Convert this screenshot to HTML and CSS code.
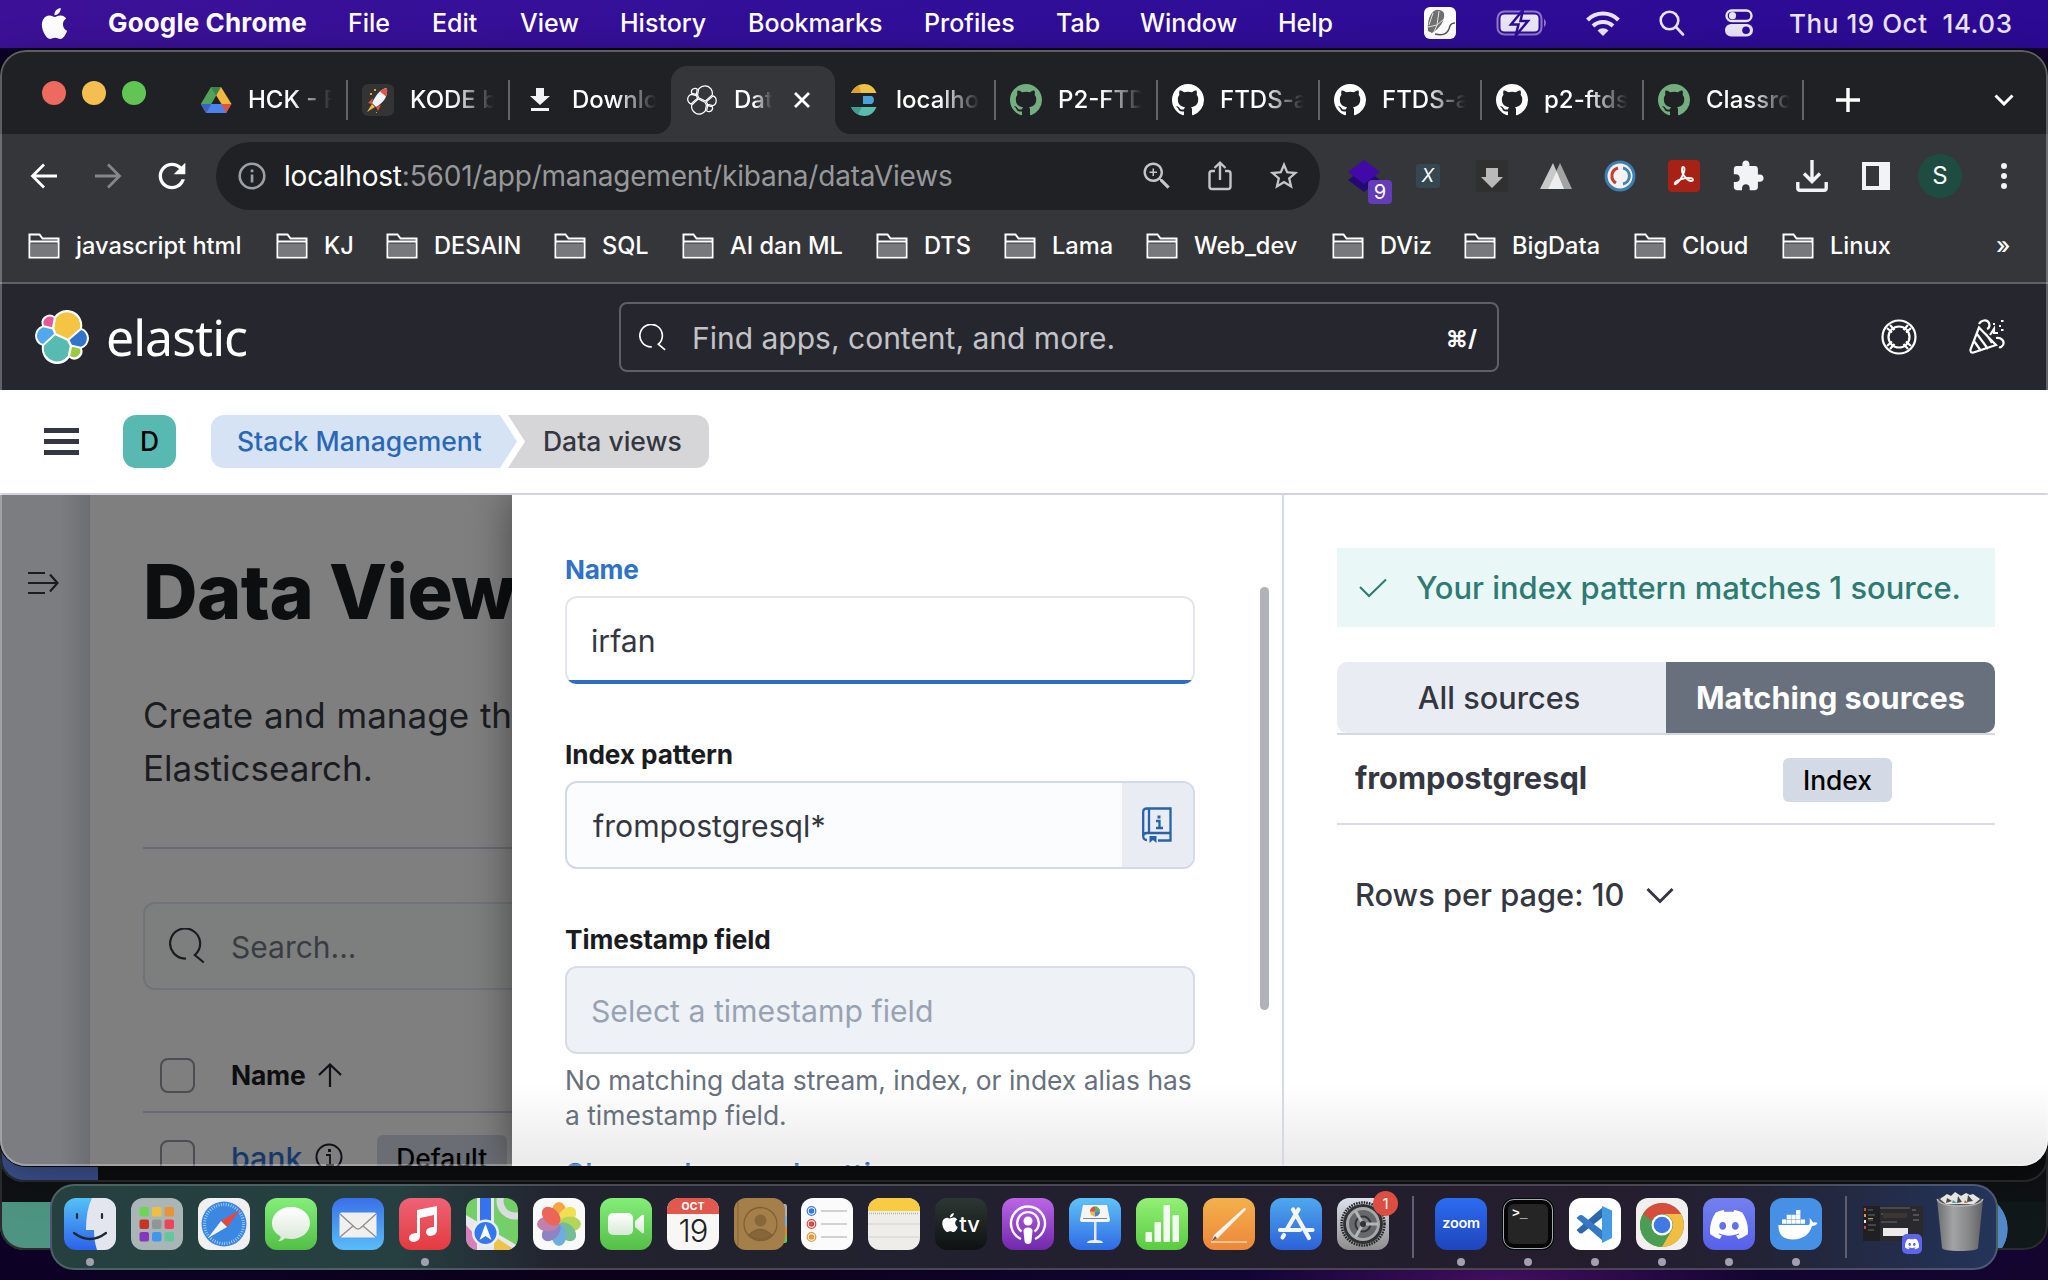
FILE: index.html
```html
<!DOCTYPE html>
<html lang="en">
<head>
<meta charset="utf-8">
<title>Data views - Elastic</title>
<link rel="stylesheet" href="styles.css">
</head>
<body>
<svg class="defs" width="0" height="0">
  <defs>
    <symbol id="apple" viewBox="0 0 24 24"><path d="M12.152 6.896c-.948 0-2.415-1.078-3.96-1.04-2.04.027-3.91 1.183-4.961 3.014-2.117 3.675-.546 9.103 1.519 12.09 1.013 1.454 2.208 3.09 3.792 3.039 1.52-.065 2.09-.987 3.935-.987 1.831 0 2.35.987 3.96.948 1.637-.026 2.676-1.48 3.676-2.948 1.156-1.688 1.636-3.325 1.662-3.415-.039-.013-3.182-1.221-3.22-4.857-.026-3.04 2.48-4.494 2.597-4.559-1.429-2.09-3.623-2.324-4.39-2.376-2-.156-3.675 1.09-4.61 1.09zM15.53 3.83c.843-1.012 1.4-2.427 1.245-3.83-1.207.052-2.662.805-3.532 1.818-.78.896-1.454 2.338-1.273 3.714 1.338.104 2.715-.688 3.559-1.701"/></symbol>
    <symbol id="github" viewBox="0 0 16 16"><path d="M8 0C3.58 0 0 3.58 0 8c0 3.54 2.29 6.53 5.47 7.59.4.07.55-.17.55-.38 0-.19-.01-.82-.01-1.49-2.01.37-2.53-.49-2.69-.94-.09-.23-.48-.94-.82-1.13-.28-.15-.68-.52-.01-.53.63-.01 1.08.58 1.23.82.72 1.21 1.87.87 2.33.66.07-.52.28-.87.51-1.07-1.78-.2-3.64-.89-3.64-3.95 0-.87.31-1.59.82-2.15-.08-.2-.36-1.02.08-2.12 0 0 .67-.21 2.2.82.64-.18 1.32-.27 2-.27s1.36.09 2 .27c1.53-1.04 2.2-.82 2.2-.82.44 1.1.16 1.92.08 2.12.51.56.82 1.27.82 2.15 0 3.07-1.87 3.75-3.65 3.95.29.25.54.73.54 1.48 0 1.07-.01 1.93-.01 2.2 0 .21.15.46.55.38A8.01 8.01 0 0 0 16 8c0-4.42-3.58-8-8-8z"/></symbol>
    <symbol id="folder" viewBox="0 0 32 26"><path d="M1.500 24.500V1.500h10l3 4h16v19z" fill="none" stroke="#fff" stroke-width="2"/><path d="M1.500 8.500h29" stroke="#fff" stroke-width="2"/><path d="M2.500 10.500h27v13h-27z" fill="#77787b"/></symbol>
    <symbol id="discord" viewBox="0 0 24 24"><path d="M20.317 4.37a19.79 19.79 0 00-4.885-1.515.074.074 0 00-.079.037c-.211.375-.445.865-.608 1.25-1.845-.276-3.68-.276-5.487 0-.164-.393-.406-.874-.618-1.25a.077.077 0 00-.079-.037A19.736 19.736 0 003.677 4.37a.07.07 0 00-.032.028C.533 9.046-.319 13.58.099 18.058a.082.082 0 00.031.056c2.053 1.508 4.041 2.423 5.993 3.03a.078.078 0 00.084-.028c.462-.63.873-1.295 1.226-1.994a.076.076 0 00-.042-.106 13.1 13.1 0 01-1.872-.892.077.077 0 01-.008-.128c.126-.094.252-.192.372-.291a.074.074 0 01.078-.011c3.928 1.793 8.18 1.793 12.061 0a.074.074 0 01.079.01c.12.099.246.198.373.292a.077.077 0 01-.007.128 12.3 12.3 0 01-1.873.891.077.077 0 00-.041.107c.36.698.772 1.363 1.225 1.993a.076.076 0 00.084.029c1.961-.607 3.95-1.522 6.002-3.03a.077.077 0 00.031-.055c.5-5.177-.838-9.674-3.548-13.66a.061.061 0 00-.031-.029zM8.02 15.331c-1.183 0-2.157-1.086-2.157-2.419s.956-2.419 2.157-2.419c1.211 0 2.176 1.095 2.157 2.419 0 1.333-.956 2.419-2.157 2.419zm7.975 0c-1.183 0-2.157-1.086-2.157-2.419s.955-2.419 2.157-2.419c1.211 0 2.176 1.095 2.157 2.419 0 1.333-.946 2.419-2.157 2.419z"/></symbol>
    <symbol id="search" viewBox="0 0 36 36"><path d="M17 31.500A15 15 0 1 1 25.800 28l9 7.500" fill="none" stroke="currentColor" stroke-width="2.200" transform="translate(0 -1)"/></symbol>
    <symbol id="petals" viewBox="0 0 52 52"><g opacity=".88"><ellipse cx="26" cy="15" rx="7.500" ry="11" fill="#f59a2c"/><ellipse cx="26" cy="15" rx="7.500" ry="11" fill="#f0dc3a" transform="rotate(45 26 26)"/><ellipse cx="26" cy="15" rx="7.500" ry="11" fill="#a9d145" transform="rotate(90 26 26)"/><ellipse cx="26" cy="15" rx="7.500" ry="11" fill="#62b58a" transform="rotate(135 26 26)"/><ellipse cx="26" cy="15" rx="7.500" ry="11" fill="#5ba4dc" transform="rotate(180 26 26)"/><ellipse cx="26" cy="15" rx="7.500" ry="11" fill="#7d74bd" transform="rotate(225 26 26)"/><ellipse cx="26" cy="15" rx="7.500" ry="11" fill="#b8719f" transform="rotate(270 26 26)"/><ellipse cx="26" cy="15" rx="7.500" ry="11" fill="#ea5240" transform="rotate(315 26 26)"/></g></symbol>
  </defs>
</svg>

<header class="menubar">
  <svg class="menubar-apple" width="31" height="31"><use href="#apple"/></svg>
  <nav class="menus">
    <b>Google Chrome</b><span>File</span><span>Edit</span><span>View</span><span>History</span><span>Bookmarks</span><span>Profiles</span><span>Tab</span><span>Window</span><span>Help</span>
  </nav>
  <div class="status">
    <svg width="32" height="32" viewBox="0 0 32 32"><rect width="32" height="32" rx="6" fill="#fff"/><path d="M4 24C3 14 6 5 12 3q5-1 8 3c1 8-4 15-12 20z" fill="#707070"/><path d="M4 20l9-2 7-6M13 18l-3 7M15 4l-2 14M9 6L5 18" stroke="#e4e4e4" fill="none"/><path d="M11 27c8 2 12 0 14-5 1-4 2-6 6-6" fill="none" stroke="#555" stroke-width="1.500"/></svg>
    <svg width="52" height="26" viewBox="0 0 52 26"><rect x="1.500" y="1.500" width="44" height="23" rx="7" fill="none" stroke="#8d78c8" stroke-width="2"/><rect x="4.500" y="4.500" width="38" height="17" rx="4" fill="#e9e5f6"/><path d="M48 8.500q4 4.500 0 9z" fill="#8d78c8"/><path d="M27 0L15 14.500h7.500L19.500 26 32 11h-7.500z" fill="#e9e5f6" stroke="#2f0c97" stroke-width="2.500"/></svg>
    <svg width="36" height="26" viewBox="0 0 36 26"><g fill="none" stroke="#e9e5f6" stroke-width="4"><path d="M2.500 10a22 22 0 0 1 31 0"/><path d="M8 16a14.500 14.500 0 0 1 20 0"/></g><path d="M12.500 20.500a8 8 0 0 1 11 0L18 26z" fill="#e9e5f6"/></svg>
    <svg width="26" height="26" viewBox="0 0 26 26"><g fill="none" stroke="#e9e5f6" stroke-width="2.600" stroke-linecap="round"><circle cx="10.500" cy="10.500" r="8.800"/><path d="M17 17l7 7.500"/></g></svg>
    <svg width="28" height="28" viewBox="0 0 28 28"><rect x="1.500" y="1.500" width="25" height="10.500" rx="5.200" fill="none" stroke="#e9e5f6" stroke-width="2.400"/><circle cx="7.500" cy="6.700" r="3.600" fill="#e9e5f6"/><rect y="15" width="28" height="12.500" rx="6.200" fill="#e9e5f6"/><circle cx="21" cy="21.200" r="3.800" fill="#2e0c96"/></svg>
    <time>Thu 19 Oct&nbsp; 14.03</time>
  </div>
</header>

<main class="desktop">
  <div class="back-window back-window-far"></div>
  <div class="back-window back-window-near"></div>

  <section class="window">
    <div class="tabstrip">
      <div class="lights"><i class="red"></i><i class="amber"></i><i class="green"></i></div>
      <div class="tab"><svg width="32" height="28" viewBox="0 0 32 28"><path d="M11 1h10l10.500 17h-10z" fill="#f3b73e"/><path d="M11 1l5.200 8.500L6 27 .8 18z" fill="#4fa35b"/><path d="M11 1h10l-4.800 8.500z" fill="#3c8548"/><path d="M6 27l5-9h20.500L26 27z" fill="#4c82ee"/><path d="M6 27l-5.200-9H11z" fill="#3a62c4"/><path d="M21.500 18h10L26 27z" fill="#e2513e"/></svg><span>HCK - F</span></div>
      <div class="tab"><svg width="32" height="32" viewBox="0 0 32 32"><rect width="32" height="32" rx="6" fill="#343434"/><path d="M25 4c-7 1-11 7-15 15l4 4c7-4 12-10 11-19z" fill="#f4f4f6"/><path d="M25 4c-3 .4-5 1.500-7 3.500l6 5c1-3 1.400-5 1-8.500z" fill="#e0524b"/><path d="M11 14l-5 5 4 1zm8 7l-3 6-2-4z" fill="#e0524b"/><path d="M10 20l-5 8 8-5z" fill="#f2c13f"/><path d="M8 9h2v2H8zM12 5h2v2h-2zM14 28h1v1h-1z" fill="#e2a33c"/></svg><span>KODE b</span></div>
      <div class="tab"><svg width="32" height="32" viewBox="0 0 32 32"><path d="M12 4h8v8h6L16 21 6 12h6zM7 24h18v3H7z" fill="#f1f3f4"/></svg><span>Downlo</span></div>
      <div class="tab tab-active"><svg width="32" height="32" viewBox="-.6 -.6 33.200 33.200"><g fill="none" stroke="#fff" stroke-width="1.300"><path d="M12.580 13.787l7.002 3.211 7.066-6.213a7.849 7.849 0 0 0 .152-1.557c0-1.692-.539-3.340-1.535-4.700a7.898 7.898 0 0 0-8.895-2.735 7.950 7.950 0 0 0-3.780 2.744L11.410 10.700z"/><path d="M5.333 21.228A7.964 7.964 0 0 0 6.701 27.300a7.904 7.904 0 0 0 8.923 2.745 7.950 7.950 0 0 0 3.784-2.748l1.166-6.102-1.556-2.985-7.030-3.210z"/><path d="M5.288 9.067l4.800 1.137L11.140 4.730a3.785 3.785 0 0 0-5.852 4.337z"/><path d="M4.872 10.214a5.294 5.294 0 0 0-2.595 1.882 5.324 5.324 0 0 0-.142 6.124 5.287 5.287 0 0 0 2.520 1.987l6.733-6.100-1.236-2.650z"/><path d="M20.873 27.277a3.736 3.736 0 0 0 5.386-.845 3.813 3.813 0 0 0 .451-3.484l-4.800-1.125z"/><path d="M21.848 20.563l5.280 1.238a5.340 5.340 0 0 0 3.602-5.091 5.322 5.322 0 0 0-3.359-4.930l-6.905 6.070z"/></g></svg><span>Dat</span><svg class="tab-close" width="20" height="20" viewBox="0 0 20 20"><path d="M3 3l14 14M17 3L3 17" stroke="#fff" stroke-width="2.800"/></svg></div>
      <div class="tab"><svg width="32" height="32" viewBox="0 0 32 32"><path d="M3 9C6 3 11 0 16.500 0c5 0 9.500 3 12 9z" fill="#eec344"/><path d="M3 9C5 5 8 2.500 11 1l2 8z" fill="#d9a334"/><path d="M2 12h11v8H2z" fill="#1b2127"/><path d="M15 12h9a5 5 0 0 1 0 8h-9z" fill="#4aa2dc"/><path d="M3 23h25.500c-2.500 6-7 9-12 9C11 32 6 29 3 23z" fill="#5bbbae"/><path d="M3 23h11l-4 7.500C7 29 4.500 26.500 3 23z" fill="#459a90"/></svg><span>localho</span></div>
      <div class="tab tab-green"><svg width="32" height="32"><use href="#github"/></svg><span>P2-FTD</span></div>
      <div class="tab"><svg width="32" height="32"><use href="#github"/></svg><span>FTDS-a</span></div>
      <div class="tab"><svg width="32" height="32"><use href="#github"/></svg><span>FTDS-a</span></div>
      <div class="tab"><svg width="32" height="32"><use href="#github"/></svg><span>p2-ftds</span></div>
      <div class="tab tab-green tab-end"><svg width="32" height="32"><use href="#github"/></svg><span>Classro</span></div>
      <svg class="tab-new" width="24" height="24" viewBox="0 0 24 24"><path d="M12 0v24M0 12h24" stroke="#fff" stroke-width="3.400"/></svg>
      <svg class="tab-list" width="20" height="12" viewBox="0 0 20 12"><path d="M1.500 1.500L10 10l8.500-8.500" fill="none" stroke="#fff" stroke-width="3"/></svg>
    </div>

    <div class="toolbar">
      <div class="nav-buttons">
        <svg width="28" height="26" viewBox="0 0 28 26"><path d="M27 13H2.500M14 1.500L2.500 13 14 24.500" fill="none" stroke="#fff" stroke-width="2.800"/></svg>
        <svg width="28" height="26" viewBox="0 0 28 26"><path d="M1 13h24.500M14 1.500L25.500 13 14 24.500" fill="none" stroke="#85868a" stroke-width="2.800"/></svg>
        <svg width="40" height="40" viewBox="0 0 24 24"><path fill="#fff" d="M17.650 6.350C16.200 4.900 14.210 4 12 4c-4.420 0-7.990 3.580-7.990 8s3.570 8 7.990 8c3.730 0 6.840-2.550 7.730-6h-2.080c-.82 2.330-3.040 4-5.650 4-3.310 0-6-2.690-6-6s2.690-6 6-6c1.660 0 3.140.69 4.220 1.780L13 11h7V4z"/></svg>
      </div>
      <div class="omnibox">
        <svg width="28" height="28" viewBox="0 0 28 28"><circle cx="14" cy="14" r="12.300" fill="none" stroke="#9aa0a6" stroke-width="2.600"/><path d="M12.700 7.500h2.700v2.700h-2.700zm0 5h2.700v8h-2.700z" fill="#9aa0a6"/></svg>
        <span class="url"><em>localhost</em>:5601/app/management/kibana/dataViews</span>
        <svg width="36" height="36" viewBox="0 0 24 24" fill="#c3c5c8"><path d="M15.500 14h-.79l-.28-.27C15.410 12.590 16 11.110 16 9.500 16 5.910 13.090 3 9.500 3S3 5.910 3 9.500 5.910 16 9.500 16c1.610 0 3.090-.59 4.230-1.570l.27.28v.79l5 4.990L20.490 19zm-6 .4a4.900 4.900 0 1 1 0-9.800 4.900 4.900 0 0 1 0 9.800z"/><path d="M9 7h1v2h2v1h-2v2H9v-2H7V9h2z"/></svg>
        <svg width="24" height="30" viewBox="0 0 24 30"><path d="M7 10H4a2.500 2.500 0 0 0-2.500 2.500v13A2.500 2.500 0 0 0 4 28h16a2.500 2.500 0 0 0 2.500-2.500v-13A2.500 2.500 0 0 0 20 10h-3M12 19V2M6.500 7L12 1.700 17.500 7" fill="none" stroke="#c3c5c8" stroke-width="2.400"/></svg>
        <svg class="star" width="34" height="34" viewBox="0 0 24 24"><path fill="#c3c5c8" d="M22 9.240l-7.190-.62L12 2 9.190 8.630 2 9.240l5.460 4.730L5.820 21 12 17.270 18.180 21l-1.630-7.030zM12 15.400l-3.760 2.270 1-4.280-3.320-2.880 4.380-.38L12 6.100l1.710 4.040 4.380.38-3.320 2.880 1 4.280z"/></svg>
      </div>
      <div class="extensions">
        <div class="ext ext-badged"><svg width="32" height="32" viewBox="0 0 32 32"><path d="M16 8l16 12-16 12L0 20z" fill="#230a73"/><path d="M16 0l16 12-16 12L0 12z" fill="#4109a6"/></svg><span class="badge">9</span></div>
        <div class="ext"><span class="ext-x">X</span></div>
        <div class="ext"><svg width="32" height="32" viewBox="0 0 32 32"><rect width="32" height="32" rx="3" fill="#303030"/><path d="M10 8h12v9h5L16 28 5 17h5z" fill="#b9b9b9"/></svg></div>
        <div class="ext"><svg width="32" height="28" viewBox="0 0 32 28"><path d="M13 1l11 26H0z" fill="#c9c9c9"/><path d="M20 1l12 26H8z" fill="#a3a3a3"/><path d="M16.500 9L24 27H8z" fill="#eee"/></svg></div>
        <div class="ext"><svg width="32" height="32" viewBox="0 0 32 32"><circle cx="16" cy="16" r="15.500" fill="#3c7fb0"/><circle cx="16" cy="16" r="12.500" fill="#f3f3f3"/><path d="M14 8a8.200 8.200 0 0 0-2 15" fill="none" stroke="#c73c33" stroke-width="3"/><path d="M19 8a8.200 8.200 0 0 1 0 16" fill="none" stroke="#4583b4" stroke-width="3"/></svg></div>
        <div class="ext"><svg width="32" height="32" viewBox="0 0 32 32"><rect width="32" height="32" rx="4" fill="#a92115"/><path d="M15 7c3 0 1 7-2 11.500S6 26 7 23s9-5 14-5 5 3 2 3-9-6-9-10.500 1-3.500 1-3.500z" fill="none" stroke="#fff" stroke-width="1.900"/></svg></div>
        <div class="ext"><svg width="34" height="34" viewBox="0 0 24 24"><path fill="#f1f3f4" d="M20.500 11H19V7c0-1.100-.9-2-2-2h-4V3.500C13 2.120 11.880 1 10.500 1S8 2.120 8 3.500V5H4c-1.100 0-1.990.9-1.990 2v3.800H3.500c1.490 0 2.700 1.210 2.700 2.700s-1.210 2.700-2.700 2.700H2V20c0 1.100.9 2 2 2h3.800v-1.500c0-1.490 1.210-2.700 2.700-2.700s2.700 1.210 2.700 2.700V22H17c1.100 0 2-.9 2-2v-4h1.500c1.380 0 2.500-1.120 2.500-2.500S21.880 11 20.500 11z"/></svg></div>
        <div class="ext"><svg width="32" height="32" viewBox="0 0 32 32"><path d="M16 0v21M8 13.500l8 8 8-8M1.800 22v6a2.200 2.200 0 0 0 2.200 2.200h24a2.200 2.200 0 0 0 2.200-2.200v-6" fill="none" stroke="#f1f3f4" stroke-width="3.400"/></svg></div>
        <div class="ext"><svg width="28" height="28" viewBox="0 0 28 28"><path fill="#f1f3f4" fill-rule="evenodd" d="M0 0h28v28H0zM4 4v20h13V4z"/></svg></div>
        <div class="avatar">S</div>
        <svg class="kebab" width="6" height="28" viewBox="0 0 6 28" fill="#f1f3f4"><circle cx="3" cy="4" r="3"/><circle cx="3" cy="14" r="3"/><circle cx="3" cy="24" r="3"/></svg>
      </div>
    </div>

    <div class="bookmarks">
      <span><svg width="32" height="26"><use href="#folder"/></svg>javascript html</span>
      <span><svg width="32" height="26"><use href="#folder"/></svg>KJ</span>
      <span><svg width="32" height="26"><use href="#folder"/></svg>DESAIN</span>
      <span><svg width="32" height="26"><use href="#folder"/></svg>SQL</span>
      <span><svg width="32" height="26"><use href="#folder"/></svg>AI dan ML</span>
      <span><svg width="32" height="26"><use href="#folder"/></svg>DTS</span>
      <span><svg width="32" height="26"><use href="#folder"/></svg>Lama</span>
      <span><svg width="32" height="26"><use href="#folder"/></svg>Web_dev</span>
      <span><svg width="32" height="26"><use href="#folder"/></svg>DViz</span>
      <span><svg width="32" height="26"><use href="#folder"/></svg>BigData</span>
      <span><svg width="32" height="26"><use href="#folder"/></svg>Cloud</span>
      <span><svg width="32" height="26"><use href="#folder"/></svg>Linux</span>
      <i>»</i>
    </div>

    <div class="elastic-header">
      <svg width="54" height="54" viewBox="0 0 32 32"><path fill="#fff" d="M32 16.770a6.334 6.334 0 0 0-1.140-3.630 6.298 6.298 0 0 0-3.020-2.310 9.098 9.098 0 0 0-.873-5.965A9.050 9.050 0 0 0 22.560.746a9.007 9.007 0 0 0-5.994-.419 9.037 9.037 0 0 0-4.930 3.446 4.789 4.789 0 0 0-5.780-.07A4.833 4.833 0 0 0 4.198 9.283a6.380 6.380 0 0 0-3.036 2.330A6.418 6.418 0 0 0 0 15.260a6.343 6.343 0 0 0 1.145 3.646 6.305 6.305 0 0 0 3.039 2.311 9.067 9.067 0 0 0 .863 5.954 9.050 9.050 0 0 0 4.390 4.120 9.006 9.006 0 0 0 5.986.441 9.037 9.037 0 0 0 4.940-3.430 4.789 4.789 0 0 0 5.780.07 4.833 4.833 0 0 0 1.662-5.580 6.380 6.380 0 0 0 3.034-2.330A6.418 6.418 0 0 0 32 16.770z"/><path fill="#f5c443" d="M12.580 13.787l7.002 3.211 7.066-6.213a7.849 7.849 0 0 0 .152-1.557c0-1.692-.539-3.340-1.535-4.700a7.898 7.898 0 0 0-8.895-2.735 7.950 7.950 0 0 0-3.780 2.744L11.410 10.700z"/><path fill="#57bbb2" d="M5.333 21.228A7.964 7.964 0 0 0 6.701 27.300a7.904 7.904 0 0 0 8.923 2.745 7.950 7.950 0 0 0 3.784-2.748l1.166-6.102-1.556-2.985-7.030-3.210z"/><path fill="#e1589c" d="M5.288 9.067l4.800 1.137L11.140 4.730a3.785 3.785 0 0 0-5.852 4.337z"/><path fill="#52a8ef" d="M4.872 10.214a5.294 5.294 0 0 0-2.595 1.882 5.324 5.324 0 0 0-.142 6.124 5.287 5.287 0 0 0 2.520 1.987l6.733-6.100-1.236-2.650z"/><path fill="#9dc941" d="M20.873 27.277a3.736 3.736 0 0 0 5.386-.845 3.813 3.813 0 0 0 .451-3.484l-4.800-1.125z"/><path fill="#3274c9" d="M21.848 20.563l5.280 1.238a5.340 5.340 0 0 0 3.602-5.091 5.322 5.322 0 0 0-3.359-4.930l-6.905 6.070z"/></svg>
      <span class="wordmark">elastic</span>
      <div class="global-search">
        <svg width="27" height="27"><use href="#search"/></svg>
        <span>Find apps, content, and more.</span>
        <kbd>⌘/</kbd>
      </div>
      <svg class="help-icon" width="36" height="36" viewBox="0 0 36 36"><g fill="none" stroke="#fff" stroke-width="2.200"><circle cx="18" cy="18" r="16.500"/><circle cx="18" cy="18" r="10.500"/></g><path d="M6 9l5 4.500M9 6l4.500 5M30 9l-5 4.500M27 6l-4.500 5M6 27l5-4.500M9 30l4.500-5M30 27l-5-4.500M27 30l-4.500-5" stroke="#fff" stroke-width="2.200"/></svg>
      <svg class="news-icon" width="36" height="36" viewBox="0 0 36 36"><g fill="none" stroke="#fff" stroke-width="2.200"><path d="M10 8.500L1.500 30.500q-.6 3.500 3 3L27 26zM8 15l11 15M5 22l7 10M17 15l6 9"/><path d="M10 5c2-4 8-5 10-1 1 3 0 5-2 6M21 16l4-6v4h4M27 19c5-1 9 3 7 7q-2 3-4 2"/></g><path d="M24 4h2v2h-2zM32 1h2.500v2H32zM30 6h2v2h-2zM32 10h2.500v2H32z" fill="#fff"/></svg>
    </div>

    <div class="crumbbar">
      <div class="hamburger"><i></i><i></i><i></i></div>
      <div class="space-badge">D</div>
      <div class="crumbs"><a class="crumb crumb-first">Stack Management</a><span class="crumb crumb-last">Data views</span></div>
    </div>

    <div class="content">
      <aside class="side-nav"><svg width="32" height="24" viewBox="0 0 32 24"><path d="M1 2h17M1 12h29M1 22h17M23 3.500l7.500 8.500L23 20.500" fill="none" stroke="#1b1c21" stroke-width="2.200"/></svg></aside>
      <div class="page">
        <h1>Data View</h1>
        <p class="lead">Create and manage th<br>Elasticsearch.</p>
        <div class="page-search"><svg width="36" height="36"><use href="#search"/></svg><span>Search...</span></div>
        <div class="row row-head"><i class="checkbox"></i><b>Name</b><svg width="24" height="24" viewBox="0 0 24 24"><path d="M12 24V2M1 12L12 1.500 23 12" fill="none" stroke="#111216" stroke-width="2.200"/></svg></div>
        <div class="row row-item"><i class="checkbox"></i><a>bank</a><svg width="28" height="28" viewBox="0 0 28 28"><circle cx="14" cy="14" r="12.500" fill="none" stroke="#111216" stroke-width="2"/><path d="M13 6h3v3h-3z" fill="#111216"/><path d="M11 12h4v10M11 22h8" fill="none" stroke="#111216" stroke-width="1.800"/></svg><span class="tag">Default</span></div>
      </div>
      <div class="flyout">
        <form class="form">
          <label class="focus">Name</label>
          <div class="field field-focus">irfan</div>
          <label>Index pattern</label>
          <div class="field field-pattern"><span>frompostgresql*</span><div class="append"><svg width="30" height="36" viewBox="0 0 30 36"><g fill="none" stroke="#2862ab" stroke-width="2.300"><path d="M28.500 26V1.500H5Q1.200 1.500 1.200 5v24q0 4 3.800 4M7 1.500V26M1.200 29q0-3 3.800-3h23.500v7.500H16M28.500 29v4"/><path d="M14 14h3.500v6.500M14 21h7"/></g><path d="M15.500 8.500h3v3h-3zM7.500 29h7v7l-3.500-3-3.500 3z" fill="#2862ab"/></svg></div></div>
          <label>Timestamp field</label>
          <div class="field field-disabled">Select a timestamp field</div>
          <p class="hint">No matching data stream, index, or index alias has<br>a timestamp field.</p>
          <a class="advanced">Show advanced settings</a>
          <div class="scrollbar"></div>
        </form>
        <div class="sources">
          <div class="callout"><svg width="28" height="20" viewBox="0 0 28 20"><path d="M1 9l9 9L27 1.500" fill="none" stroke="#2f7a72" stroke-width="2"/></svg><span>Your index pattern matches 1 source.</span></div>
          <div class="switch"><span>All sources</span><b>Matching sources</b></div>
          <div class="source-row"><b>frompostgresql</b><span class="index-tag">Index</span></div>
          <div class="pager"><span>Rows per page: 10</span><svg width="28" height="17" viewBox="0 0 28 17"><path d="M1.500 2L14 14.500 26.500 2" fill="none" stroke="#343741" stroke-width="3"/></svg></div>
        </div>
      </div>
    </div>
  </section>

  <footer class="dock">
    <div class="app running"><svg viewBox="0 0 52 52"><defs><linearGradient id="finder" x2="0" y2="1"><stop stop-color="#55c1f7"/><stop offset="1" stop-color="#2c62ea"/></linearGradient></defs><rect width="52" height="52" rx="12" fill="url(#finder)"/><path d="M28 0h12a12 12 0 0 1 12 12v28a12 12 0 0 1-12 12h-7q-3-9-3-20h-8Q22 12 28 0z" fill="#e3e6ee"/><path d="M13 16v4M38 16v4M10 35q16 12 32 0" stroke="#1d2833" stroke-width="2.200" stroke-linecap="round" fill="none"/></svg></div>
    <div class="app"><svg viewBox="0 0 52 52"><rect width="52" height="52" rx="12" fill="#aab6b5"/><g><rect x="8.500" y="9" width="9.500" height="9.500" rx="2" fill="#6bd558"/><rect x="21" y="9" width="9.500" height="9.500" rx="2" fill="#f0bf40"/><rect x="33.500" y="9" width="9.500" height="9.500" rx="2" fill="#e69435"/><rect x="8.500" y="21.500" width="9.500" height="9.500" rx="2" fill="#cb3227"/><rect x="21" y="21.500" width="9.500" height="9.500" rx="2" fill="#909596"/><rect x="33.500" y="21.500" width="9.500" height="9.500" rx="2" fill="#ea4658"/><rect x="8.500" y="34" width="9.500" height="9.500" rx="2" fill="#8438bd"/><rect x="21" y="34" width="9.500" height="9.500" rx="2" fill="#3f97f2"/><rect x="33.500" y="34" width="9.500" height="9.500" rx="2" fill="#62c79b"/></g></svg></div>
    <div class="app"><svg viewBox="0 0 52 52"><rect width="52" height="52" rx="12" fill="#f0f0f0"/><circle cx="26" cy="26" r="22.500" fill="#3a87e4"/><circle cx="26" cy="26" r="19.500" fill="none" stroke="#b6d8f8" stroke-width="3" stroke-dasharray=".8 1.650"/><path d="M42 12L29 29l-6-6z" fill="#ea4739"/><path d="M10 40l13-17 6 6z" fill="#f4f4f4"/></svg></div>
    <div class="app"><svg viewBox="0 0 52 52"><defs><linearGradient id="green" x2="0" y2="1"><stop stop-color="#83ef79"/><stop offset="1" stop-color="#54bf47"/></linearGradient><linearGradient id="pearl" x2="0" y2="1"><stop stop-color="#fff"/><stop offset="1" stop-color="#d8e8d6"/></linearGradient></defs><rect width="52" height="52" rx="12" fill="url(#green)"/><path d="M26 9c11 0 19 7 19 16s-8 16-19 16c-2 0-4-.2-6-.8-2 2-4 3-7 3 2-1.500 3-3.500 2.500-5C10 35 7 31 7 25 7 16 15 9 26 9z" fill="url(#pearl)"/></svg></div>
    <div class="app"><svg viewBox="0 0 52 52"><defs><linearGradient id="mail" x2="0" y2="1"><stop stop-color="#3a70e8"/><stop offset="1" stop-color="#59bdf8"/></linearGradient></defs><rect width="52" height="52" rx="12" fill="url(#mail)"/><rect x="7.500" y="14.500" width="37" height="25" rx="2" fill="#f1f0ef"/><path d="M8 16l15.500 14q2.500 2 5 0L44 16M8 39l13-11M44 39L31 28" fill="none" stroke="#8d8d8d" stroke-width="1.300"/></svg></div>
    <div class="app running"><svg viewBox="0 0 52 52"><defs><linearGradient id="music" x2="0" y2="1"><stop stop-color="#ee6375"/><stop offset="1" stop-color="#e43a40"/></linearGradient></defs><rect width="52" height="52" rx="12" fill="url(#music)"/><path d="M18 12l20-4v24c0 7-11 8-11 2 0-4 5-5 8-5V17l-14 3v18c0 7-11 8-11 2 0-4 5-5 8-5z" fill="#fff"/></svg></div>
    <div class="app"><svg viewBox="0 0 52 52"><defs><clipPath id="tile"><rect width="52" height="52" rx="12"/></clipPath></defs><g clip-path="url(#tile)"><path d="M0 0h52v52H0z" fill="#74cf68"/><path d="M0 22l13 9v21H0z" fill="#d780ba"/><path d="M0 17L52 48v8H26L0 27z" fill="#e8e8ec"/><path d="M28 38l24 16H28z" fill="#eec34a"/><circle cx="49" cy="3" r="15" fill="none" stroke="#d9dde0" stroke-width="7"/><path d="M11 0h17v52H11z" fill="#e8e8ee"/><path d="M14 0h11v26H14z" fill="#3672ee"/></g><circle cx="19.500" cy="35" r="13.500" fill="#e9effb"/><circle cx="19.500" cy="35" r="11" fill="#3477ee"/><path d="M19.500 26l6 16-6-4-6 4z" fill="#fff"/></svg></div>
    <div class="app"><svg viewBox="0 0 52 52"><rect width="52" height="52" rx="12" fill="#f9f9f9"/><use href="#petals"/></svg></div>
    <div class="app"><svg viewBox="0 0 52 52"><rect width="52" height="52" rx="12" fill="url(#green)"/><rect x="8" y="15" width="25" height="22" rx="5" fill="url(#pearl)"/><path d="M35 23l7-6q2-1 2 1v16q0 2-2 1l-7-6z" fill="url(#pearl)"/></svg></div>
    <div class="app"><div class="calendar"><b>OCT</b><span>19</span></div></div>
    <div class="app"><svg viewBox="0 0 52 52"><path d="M45 6h6q2 0 2 3v9h-8z" fill="#aeb0b1"/><path d="M45 18h8v10h-8z" fill="#6cb3e8"/><path d="M45 28h8v9h-8z" fill="#e08b34"/><path d="M45 37h8v6q0 2-3 2h-5z" fill="#65c75a"/><rect width="51" height="52" rx="12" fill="#a57f49"/><path d="M4 4v44" stroke="#8b683a" stroke-width="1.200"/><g fill="none" stroke="#7f6035" stroke-width="1.300"><circle cx="26.500" cy="26" r="16.500"/><path d="M15 37q11-11 23 0-11 9-23 0z" fill="#87673a"/></g><circle cx="26.500" cy="22.500" r="6" fill="#87673a"/></svg></div>
    <div class="app"><svg viewBox="0 0 52 52"><rect width="52" height="52" rx="12" fill="#fbfbfb"/><g stroke-width="1.200" fill="#fff"><circle cx="10.500" cy="13" r="4.300" stroke="#3576ee"/><circle cx="10.500" cy="26" r="4.300" stroke="#e04a3c"/><circle cx="10.500" cy="39" r="4.300" stroke="#e69a3a"/></g><circle cx="10.500" cy="13" r="2.800" fill="#3576ee"/><circle cx="10.500" cy="26" r="2.800" fill="#e04a3c"/><circle cx="10.500" cy="39" r="2.800" fill="#e69a3a"/><path d="M20 13h26M20 26h26M20 39h26" stroke="#c5c5c7" stroke-width="1.600"/></svg></div>
    <div class="app"><svg viewBox="0 0 52 52"><rect width="52" height="52" rx="12" fill="#eeede9"/><path d="M0 13V12A12 12 0 0 1 12 0h28a12 12 0 0 1 12 12v1z" fill="#f7cb42"/><path d="M0 26h52M0 39h52" stroke="#d2d1ce"/><path d="M1 15.500h50" stroke="#b5b3ae" stroke-width="1.500" stroke-dasharray="1 1"/></svg></div>
    <div class="app"><div class="appletv"><svg width="16" height="19" viewBox="2 0 20 24"><use href="#apple" width="24" height="24" fill="#fff"/></svg><span>tv</span></div></div>
    <div class="app"><svg viewBox="0 0 52 52"><defs><linearGradient id="pod" x2="0" y2="1"><stop stop-color="#bc66e7"/><stop offset="1" stop-color="#7128ac"/></linearGradient></defs><rect width="52" height="52" rx="12" fill="url(#pod)"/><g fill="none" stroke="#fff" stroke-width="2.400"><path d="M19 41a17 17 0 1 1 14 0"/><path d="M19.500 33.500a10.800 10.800 0 1 1 13 0"/></g><circle cx="26" cy="23" r="4.500" fill="#fff"/><path d="M21.500 33q0-3.500 4.500-3.500t4.500 3.500l-1 10q-.5 3-3.500 3t-3.500-3z" fill="#fff"/></svg></div>
    <div class="app"><svg viewBox="0 0 52 52"><defs><linearGradient id="key" x2="0" y2="1"><stop stop-color="#5fc2f8"/><stop offset="1" stop-color="#2f6ae5"/></linearGradient></defs><rect width="52" height="52" rx="12" fill="url(#key)"/><path d="M14 7h24l3 15q0 2-2 2H13q-2 0-2-2z" fill="#f5f5f5"/><path d="M14 20.500h24" stroke="#7d8795"/><circle cx="26" cy="13.500" r="5" fill="#e8b84b"/><path d="M26 8.500a5 5 0 0 1 5 5h-5z" fill="#58b25b"/><path d="M26 13.500h5a5 5 0 0 1-5 5z" fill="#4a7fd6"/><path d="M21 13.500a5 5 0 0 1 5-5v5z" fill="#dc5148"/><path d="M25 24h2.500v19H25z" fill="#e3e6ea"/><path d="M18 45q0-3 8-3t8 3z" fill="#f1f1f1"/></svg></div>
    <div class="app"><svg viewBox="0 0 52 52"><defs><linearGradient id="num" x2="0" y2="1"><stop stop-color="#92f076"/><stop offset="1" stop-color="#5acb40"/></linearGradient></defs><rect width="52" height="52" rx="12" fill="url(#num)"/><g fill="#f3fbf0"><rect x="9.500" y="34" width="6.500" height="10" rx="1"/><rect x="18.500" y="24" width="6.500" height="20" rx="1"/><rect x="27.500" y="7" width="6.500" height="37" rx="1"/><rect x="36.500" y="17" width="6.500" height="27" rx="1"/></g></svg></div>
    <div class="app"><svg viewBox="0 0 52 52"><defs><linearGradient id="pages" x2="0" y2="1"><stop stop-color="#f3b14b"/><stop offset="1" stop-color="#ee8639"/></linearGradient></defs><rect width="52" height="52" rx="12" fill="url(#pages)"/><path d="M41 10q2.500-1 1.500 2L15 40l-6.500 3.500L11 37z" fill="#f7f3ee"/><path d="M8.500 43.500L12 38l2 2.500z" fill="#6c5b49"/><path d="M8 44h36" stroke="#fbd9ae" stroke-width="1.500"/></svg></div>
    <div class="app"><svg viewBox="0 0 52 52"><defs><linearGradient id="store" x2="0" y2="1"><stop stop-color="#4fa8ee"/><stop offset="1" stop-color="#2b62d8"/></linearGradient></defs><rect width="52" height="52" rx="12" fill="url(#store)"/><path d="M28.500 11.500L17 31M23 11.500L39 40M14 37l-1.500 2.500M10 32h20M37 32h5.500" stroke="#f4f6fa" stroke-width="4.200" stroke-linecap="round"/></svg></div>
    <div class="app"><svg viewBox="0 0 52 52"><defs><linearGradient id="set" x2="0" y2="1"><stop stop-color="#dbe1ec"/><stop offset="1" stop-color="#8f8d8c"/></linearGradient></defs><rect width="52" height="52" rx="12" fill="url(#set)"/><circle cx="26" cy="26" r="21.500" fill="none" stroke="#232427" stroke-width="2.500" stroke-dasharray="1.600 1"/><circle cx="26" cy="26" r="20" fill="#303134"/><circle cx="26" cy="26" r="15.500" fill="#66686a" stroke="#a7a8aa" stroke-width="3"/><circle cx="26" cy="26" r="7.500" fill="#7b7d7f" stroke="#333437" stroke-width="2"/><path d="M26 26h15M26 26l-7.500-13M26 26l-7.500 13" stroke="#b5b6b8" stroke-width="3"/><circle cx="26" cy="26" r="3" fill="#303134"/></svg><span class="alert">1</span></div>
    <hr>
    <div class="app running"><div class="zoom">zoom</div></div>
    <div class="app running"><div class="terminal">&gt;_</div></div>
    <div class="app running"><svg viewBox="0 0 52 52"><rect width="52" height="52" rx="12" fill="#fff"/><path d="M34 9v10L13 35.500l-2.500-.3L7.500 32z" fill="#2d68ac"/><path d="M34 43V33L13 17l-2.500.3L7.500 20z" fill="#3579c4"/><path d="M33 8l10 4.500V40L33 45z" fill="#459be2"/></svg></div>
    <div class="app running"><svg viewBox="0 0 52 52"><rect width="52" height="52" rx="12" fill="#f1f0ef"/><circle cx="26" cy="27" r="22" fill="#4b9d53"/><path d="M7 16a22 22 0 0 1 38 0H26a11 11 0 0 0-10 7z" fill="#d84c3c"/><path d="M26 16h19a22 22 0 0 1-19 33l9.500-16.500A11 11 0 0 0 26 16z" fill="#f1bd42"/><path d="M7 16l10 17q6 7 12 4.500L24 49A22 22 0 0 1 7 16z" fill="#4b9d53"/><circle cx="26" cy="27" r="10.500" fill="#fff"/><circle cx="26" cy="27" r="8.300" fill="#4079e4"/></svg></div>
    <div class="app running"><svg viewBox="0 0 52 52"><defs><linearGradient id="disc" x2="0" y2="1"><stop stop-color="#7480ee"/><stop offset="1" stop-color="#5661ea"/></linearGradient></defs><rect width="52" height="52" rx="12" fill="url(#disc)"/><use href="#discord" x="7" y="7.500" width="38" height="38" fill="#fff"/></svg></div>
    <div class="app running"><svg viewBox="0 0 52 52"><rect width="52" height="52" rx="12" fill="#4690e6"/><path d="M8.500 27h30q2-1 1-7 2 1.500 3.500 4.500 3-.6 4.500.5-1.500 3-5.500 3Q38 41 23 41.500 8 41.500 8.500 27z" fill="#fff"/><g fill="#fff"><path d="M12 21.500h4.300v4.300H12zM16.700 21.500H21v4.300h-4.300zM21.400 21.500h4.300v4.300h-4.300zM26.100 21.500h4.300v4.300h-4.300zM30.800 21.500h4.300v4.300h-4.300zM16.700 16.800H21v4.300h-4.300zM21.400 16.800h4.300v4.300h-4.300zM26.100 16.800h4.300v4.300h-4.300zM26.100 12.100h4.300v4.300h-4.300z"/></g></svg></div>
    <hr>
    <div class="thumb"><svg width="60" height="48" viewBox="0 0 60 48"><path d="M0 0h60v35H0z" fill="#2a2a2e"/><path d="M0 0h17v35H0z" fill="#202024"/><path d="M17 2h30M18 8h18M20 11h12M18 16h16M5 4h5M5 9h7M5 14h5M5 19h8M5 24h6" stroke="#67686c" stroke-width="1.200"/><path d="M20 22h25v8H20z" fill="#ecebe9"/><path d="M1 2h2v3H1zM1 20h2v3H1z" fill="#d44a3c"/><path d="M1 8h2v3H1zM5 12h5v1H5z" fill="#d3a03a"/><path d="M1 14h2v3H1z" fill="#e8e8e8"/><path d="M20 7h24v5H20z" fill="#3d3530"/><path d="M49 4h4M50 9h6M50 14h6" stroke="#77787c"/><rect x="39" y="28" width="20" height="20" rx="5" fill="#5b66ea"/><use href="#discord" x="42" y="31" width="14" height="14" fill="#fff"/></svg></div>
    <div class="trash"><svg width="48" height="60" viewBox="0 0 48 60"><defs><linearGradient id="can"><stop stop-color="#6d6e70"/><stop offset=".35" stop-color="#a3a4a6"/><stop offset=".7" stop-color="#858688"/><stop offset="1" stop-color="#5f6062"/></linearGradient></defs><path d="M1 7h46l-5 49q-1 3-18 3T6 56z" fill="url(#can)"/><ellipse cx="24" cy="8" rx="22" ry="5" fill="#4d4e50"/><path d="M4 7l7-5 4 2 4-4 6 4 5-3 4 2 3-1 7 5-6 5H10z" fill="#e6e5e2"/><path d="M11 6l5 3-6 2zM22 4l4 6-5 1zM32 3l5 6-6 1z" fill="#47484c"/><path d="M17 8l4 3h-5z" fill="#3ea9a4"/><path d="M29 8l3 3h-4z" fill="#c8733a"/><path d="M1 7q3 7 23 7t23-7" fill="none" stroke="#b3b4b6" stroke-width="1.500"/></svg></div>
  </footer>
</main>
</body>
</html>
```
FILE: styles.css
```css
* { box-sizing: border-box; }
body {
  margin: 0;
  width: 2048px;
  height: 1280px;
  overflow: hidden;
  display: flex;
  flex-direction: column;
  font-family: Inter, "Liberation Sans", sans-serif;
  background: #0c0324;
  color: #343741;
}
svg { display: block; flex: none; }
.defs { position: absolute; }
h1, p { margin: 0; }

/* macOS menu bar */
.menubar {
  flex: none;
  height: 48px;
  display: flex;
  align-items: center;
  padding: 0 37px 2px 39px;
  background: linear-gradient(90deg, #3c1197, #320f99 40%, #2c0a94);
  color: #fff;
  font-size: 25px;
  font-weight: 500;
}
.menubar-apple { fill: #fff; }
.menus {
  display: grid;
  grid-template-columns: 240px 84px 88px 100px 128px 176px 132px 84px 138px 80px;
  margin-left: 38px;
}
.menus b { font-size: 26px; line-height: 30px; letter-spacing: .15px; }
.status {
  margin-left: auto;
  display: flex;
  align-items: center;
  color: #e9e5f6;
}
.status svg:nth-child(1) { margin-right: 40px; }
.status svg:nth-child(2) { margin-right: 37px; }
.status svg:nth-child(3) { margin-right: 38px; }
.status svg:nth-child(4) { margin-right: 40px; }
.status svg:nth-child(5) { margin-right: 36px; }
.status time { width: 222px; white-space: nowrap; font-size: 26px; letter-spacing: .55px; }

/* Desktop with stacked windows */
.desktop {
  position: relative;
  flex: 1;
  background:
    radial-gradient(ellipse 260px 60px at 1500px 1232px, #420e5e, transparent),
    linear-gradient(90deg, #0d0226, #0b0118 35%, #110534 60%, #14052f);
}
.back-window { position: absolute; left: 0; right: 0; box-shadow: inset 0 0 0 2px #2b2c2e; }
.back-window-far {
  top: 900px;
  height: 302px;
  border-radius: 24px;
  background:
    radial-gradient(circle 36px at 1972px 281px, #5388c9 98%, transparent),
    linear-gradient(#0f1214 84%, transparent 84%),
    linear-gradient(90deg, #4d9582 0, #4d9582 90px, #11181a 90px);
}
.back-window-near {
  top: 900px;
  height: 234px;
  border-radius: 24px;
  background: linear-gradient(90deg, #3d5290 98px, #0c0e10 98px);
}
.window {
  position: absolute;
  left: 0;
  top: 2px;
  width: 2048px;
  height: 1116px;
  display: flex;
  flex-direction: column;
  overflow: hidden;
  border-radius: 26px;
  box-shadow: 0 0 0 1px #08080a, 0 10px 40px rgba(0, 0, 0, .35);
  background: #202124;
}
.window::after {
  content: "";
  position: absolute;
  inset: 0;
  border: 2px solid rgba(255, 255, 255, .28);
  border-radius: 26px;
  pointer-events: none;
}

/* Tabs */
.tabstrip { flex: none; height: 84px; display: flex; padding-top: 16px; color: #fff; }
.lights { width: 186px; display: flex; gap: 16px; padding: 15px 0 0 42px; }
.lights i { width: 24px; height: 24px; border-radius: 50%; }
.red { background: #ec6a5e; }
.amber { background: #f4bf50; }
.green { background: #61c554; }
.tab {
  width: 162px;
  height: 68px;
  display: flex;
  align-items: center;
  padding-left: 14px;
  font-size: 24px;
  font-weight: 500;
  fill: #fff;
  background: linear-gradient(#626366, #626366) right 14px / 2px 40px no-repeat;
}
.tab-green { fill: #74ae80; }
.tab-end { width: 160px; }
.tab span {
  margin: -1px 0 0 16px;
  width: 84px;
  white-space: nowrap;
  -webkit-mask-image: linear-gradient(90deg, #000 52%, transparent);
  mask-image: linear-gradient(90deg, #000 52%, transparent);
}
.tab:nth-child(4) { background: none; }
.tab.tab-active { width: 164px; padding-left: 15px; margin-left: -1px; margin-right: -1px; background: #35363a; border-radius: 16px 16px 0 0; position: relative; }
.tab-active::before, .tab-active::after {
  content: "";
  position: absolute;
  bottom: 0;
  width: 16px;
  height: 16px;
}
.tab-active::before { left: -16px; background: radial-gradient(circle at 0 0, transparent 16px, #35363a 16.5px); }
.tab-active::after { right: -16px; background: radial-gradient(circle at 100% 0, transparent 16px, #35363a 16.5px); }
.tab-active span { width: 38px; }
.tab-close { margin-left: 20px; }
.tab-new { margin: 22px 0 0 32px; }
.tab-list { margin: 28px 0 0 134px; }

/* Toolbar */
.toolbar { flex: none; height: 84px; display: flex; align-items: center; background: #35363a; }
.nav-buttons { width: 216px; display: flex; align-items: center; padding-left: 30px; gap: 36px; }
.nav-buttons svg:last-child { margin-left: -6px; }
.omnibox {
  width: 1104px;
  height: 68px;
  border-radius: 34px;
  background: #202124;
  display: flex;
  align-items: center;
  padding: 0 19px 0 22px;
  gap: 33px;
}
.url { flex: 1; margin-left: -15px; font-size: 28px; letter-spacing: -.2px; color: #97989b; }
.url em { font-style: normal; color: #fff; }
.star { margin-left: 2px; }
.extensions { flex: 1; display: flex; align-items: center; padding-left: 12px; }
.ext { width: 64px; display: flex; justify-content: center; }
.ext-badged { position: relative; }
.badge {
  position: absolute;
  left: 36px;
  top: 20px;
  width: 24px;
  height: 24px;
  border-radius: 4px;
  background: #643bb8;
  color: #fff;
  font-size: 20px;
  line-height: 25px;
  text-align: center;
}
.ext-x {
  width: 24px;
  height: 24px;
  border-radius: 3px;
  background: #364752;
  color: #fff;
  font: italic 18px/24px Inter, sans-serif;
  text-align: center;
}
.avatar {
  width: 44px;
  height: 44px;
  margin-left: 10px;
  border-radius: 50%;
  background: #1f4c40;
  color: #fff;
  font-size: 24px;
  line-height: 44px;
  text-align: center;
}
.kebab { margin-left: 39px; }

/* Bookmarks */
.bookmarks {
  flex: none;
  height: 66px;
  display: grid;
  grid-template-columns: 248px 110px 168px 128px 194px 128px 142px 186px 132px 170px 148px 214px 20px;
  padding: 0 0 9px 28px;
  align-items: center;
  background: #35363a;
  border-bottom: 2px solid #5f6063;
  color: #fff;
  font-size: 23.6px;
  font-weight: 500;
}
.bookmarks span { display: flex; align-items: center; gap: 16px; white-space: nowrap; }
.bookmarks i { font-style: normal; }

/* Elastic header */
.elastic-header {
  flex: none;
  height: 106px;
  display: flex;
  align-items: center;
  padding-left: 35px;
  background: #25262e;
  color: #fff;
}
.wordmark {
  width: 511px;
  margin-left: 17px;
  font: 400 50px/60px "Noto Sans", sans-serif;
  letter-spacing: -1px;
}
.global-search {
  width: 880px;
  height: 70px;
  margin-left: 2px;
  display: flex;
  align-items: center;
  padding: 0 20px 0 18px;
  border: 2px solid #5f6066;
  border-radius: 8px;
}
.global-search span { flex: 1; margin: 2px 0 0 26px; font-size: 30px; color: #c2c3c6; }
.global-search kbd { margin-top: 4px; font: 700 23px/30px Inter, "DejaVu Sans", sans-serif; }
.help-icon { margin-left: 382px; }
.news-icon { margin-left: 52px; }

/* Breadcrumb bar */
.crumbbar {
  flex: none;
  height: 105px;
  display: flex;
  align-items: center;
  padding-left: 44px;
  background: #fff;
  border-bottom: 2px solid #d0d3e0;
}
.hamburger { width: 35px; display: grid; gap: 6px; }
.hamburger i { height: 5px; background: #343741; }
.space-badge {
  width: 53px;
  height: 53px;
  margin: 0 35px 0 44px;
  border-radius: 13px;
  background: #57b9b1;
  color: #000;
  font-size: 26.4px;
  font-weight: 500;
  line-height: 53px;
  text-align: center;
}
.crumbs { display: flex; }
.crumb { height: 53px; font-size: 26.5px; font-weight: 500; line-height: 53px; white-space: nowrap; }
.crumb-first {
  width: 306px;
  padding-left: 26px;
  color: #2a67b5;
  background: #d6e3f4;
  border-radius: 13px 0 0 13px;
  clip-path: polygon(0 0, 289px 0, 100% 50%, 289px 100%, 0 100%);
}
.crumb-last {
  width: 201px;
  margin-left: -9px;
  padding-left: 35px;
  background: #d6d6d8;
  border-radius: 0 13px 13px 0;
  clip-path: polygon(0 0, 100% 0, 100% 100%, 0 100%, 17px 50%);
}

/* Dimmed page behind the flyout */
.content { flex: 1; min-height: 0; display: flex; overflow: hidden; background: #7f7f7f; }
.side-nav {
  width: 90px;
  padding: 76px 0 0 27px;
  background: linear-gradient(90deg, transparent 60px, rgba(0, 0, 0, .12)), #7b7d80;
}
.page { width: 422px; padding-left: 53px; overflow: hidden; white-space: nowrap; }
.page h1 { margin-top: 52px; font-size: 75.5px; font-weight: 800; line-height: 90px; letter-spacing: -.6px; color: #0d0e10; }
.lead {
  margin-top: 52px;
  padding-bottom: 52px;
  font-size: 35px;
  line-height: 53px;
  word-spacing: 1px;
  color: #1b1c21;
  border-bottom: 2px solid #686b70;
}
.page-search {
  height: 88px;
  margin-top: 53px;
  display: flex;
  align-items: center;
  padding-left: 24px;
  border: 2px solid #72737a;
  border-right: 0;
  border-radius: 12px 0 0 12px;
  background: #7d7f7e;
  color: #1b1c21;
}
.page-search span { margin: 2px 0 0 26px; font-size: 30px; color: #3a3c44; }
.row { display: flex; align-items: center; padding-left: 17px; }
.row-head { margin-top: 49px; height: 74px; border-bottom: 2px solid #686b70; color: #0d0e10; font-size: 26.4px; }
.row-head b { margin: 0 13px 0 36px; font-weight: 700; letter-spacing: -.2px; }
.row-item { height: 88px; }
.row-item a { margin: 1px 12px 0 36px; font-size: 30.4px; font-weight: 500; color: #17396a; }
.checkbox { width: 35px; height: 35px; border: 2px solid #4c4d50; border-radius: 8px; flex: none; }
.tag {
  width: 130px;
  height: 44px;
  margin-left: 34px;
  border-radius: 6px;
  background: #6a6d73;
  color: #000;
  font-size: 26.4px;
  font-weight: 500;
  line-height: 46px;
  text-align: center;
}

/* Flyout */
.flyout {
  width: 1536px;
  display: flex;
  background: linear-gradient(#fff 590px, #e9e9ea);
  box-shadow: 0 0 40px rgba(0, 0, 0, .45);
  position: relative;
}
.form { position: relative; width: 772px; padding: 57px 87px 0 53px; overflow: hidden; border-right: 2px solid #d3dae6; }
.form label { display: block; font-size: 26.2px; font-weight: 700; line-height: 36px; letter-spacing: -.1px; color: #1a1c21; }
.form label.focus { color: #2f72c8; letter-spacing: -.3px; }
.field {
  height: 88px;
  margin: 8px 0 53px;
  display: flex;
  align-items: center;
  padding: 2px 0 0 24px;
  border: 2px solid #d3d9e8;
  border-radius: 12px;
  font-size: 30.2px;
  background: #fbfcfd;
}
.field-focus {
  border-color: #e3e6f2 #e3e6f2 transparent;
  background: linear-gradient(#2f6cc6, #2f6cc6) bottom / 100% 4px no-repeat border-box, #fff;
}
.field-pattern { padding: 0 0 0 26px; justify-content: space-between; }
.field-pattern span { margin-top: 2px; }
.append {
  width: 71px;
  height: 84px;
  display: flex;
  align-items: center;
  justify-content: center;
  padding-right: 2px;
  border-radius: 0 10px 10px 0;
  background: #e9edf3;
}
.field-disabled { margin-bottom: 9px; color: #98a2b3; background: #eef2f7; border-color: #d8dcea; }
.hint { font-size: 26.4px; line-height: 35.2px; color: #69707d; white-space: nowrap; }
.advanced { display: block; margin-top: 24px; font-size: 30.8px; line-height: 35px; font-weight: 500; color: #2a67b5; }
.scrollbar { position: absolute; left: 748px; top: 92px; width: 9px; height: 423px; border-radius: 5px; background: #b0b2b8; }
.sources { width: 764px; padding: 53px 53px 0; }
.callout {
  height: 79px;
  display: flex;
  align-items: center;
  padding-left: 22px;
  background: #e9f7f6;
  color: #2f7a72;
  font-size: 30.9px;
  font-weight: 500;
  white-space: nowrap;
}
.callout span { margin-left: 29px; }
.switch {
  height: 73px;
  margin-top: 35px;
  display: grid;
  grid-template-columns: 329px 329px;
  border-bottom: 2px solid #d3d7e6;
  font-size: 30.7px;
  line-height: 72px;
  text-align: center;
}
.switch span, .switch b { height: 71px; }
.switch span { background: #e9edf3; border-radius: 10px 0 0 10px; padding-right: 5px; font-weight: 500; }
.switch b { background: #69707d; border-radius: 0 10px 10px 0; color: #fff; }
.source-row {
  height: 90px;
  display: grid;
  grid-template-columns: 428px 109px;
  align-items: center;
  padding-left: 18px;
  border-bottom: 2px solid #d8dbe4;
  font-size: 30.8px;
}
.source-row b { font-weight: 700; margin-top: -4px; }
.index-tag {
  height: 44px;
  margin-top: 2px;
  border-radius: 6px;
  background: #d3dae6;
  color: #000;
  font-size: 26.4px;
  font-weight: 500;
  line-height: 44px;
  text-align: center;
}
.pager { display: flex; align-items: center; gap: 22px; padding: 50px 0 0 18px; font-size: 30.8px; line-height: 40px; font-weight: 500; }

/* Dock */
.dock {
  position: absolute;
  left: 50px;
  top: 1136px;
  width: 1948px;
  height: 86px;
  display: flex;
  align-items: flex-start;
  gap: 15px;
  padding: 12px 0 0 12px;
  border: 2px solid rgba(255, 255, 255, .18);
  border-radius: 24px;
  background: linear-gradient(90deg, #25403f 0, #263f41 18%, #22232f 26%, #221f2e 60%, #241d2e 80%, #222335 88%, #24345a);
}
.app { position: relative; flex: none; width: 52px; height: 52px; }
.app > svg { width: 52px; height: 52px; overflow: visible; }
.running::after {
  content: "";
  position: absolute;
  left: 22px;
  top: 60px;
  width: 8px;
  height: 8px;
  border-radius: 50%;
  background: #a29fb0;
}
.dock hr { width: 2px; height: 62px; margin: -2px 6px 0 8px; border: 0; background: #625e70; }
.calendar, .appletv, .zoom, .terminal { width: 52px; height: 52px; border-radius: 12px; overflow: hidden; }
.calendar { background: #f8f7f6; text-align: center; }
.calendar b { display: block; height: 16px; background: #e1594d; color: #fff; font-size: 10.5px; line-height: 17px; }
.calendar span { display: block; color: #222; font-size: 31px; font-weight: 300; line-height: 34px; letter-spacing: -1px; }
.appletv {
  display: flex;
  align-items: center;
  justify-content: center;
  gap: 1px;
  background: linear-gradient(#2c3733, #0e1112);
  color: #fff;
  font-size: 22px;
  font-weight: 500;
  line-height: 50px;
}
.appletv svg { margin-bottom: 3px; }
.zoom { background: linear-gradient(#2c6cf0, #1f45bd); color: #fff; font-size: 14.5px; font-weight: 600; line-height: 50px; text-align: center; letter-spacing: -.3px; }
.terminal {
  padding: 2px 0 0 4px;
  background: #252525;
  border: 6px solid #060606;
  outline: 1.5px solid #9fb0b5;
  outline-offset: -2px;
  color: #fff;
  font: 700 13px/16px "Liberation Mono", monospace;
}
.alert {
  position: absolute;
  left: 36px;
  top: -7px;
  width: 25px;
  height: 25px;
  border-radius: 50%;
  background: #dc4e41;
  color: #fff;
  font-size: 15px;
  line-height: 25px;
  text-align: center;
}
.thumb { margin: 8px 0 0 -5px; }
.trash { margin: -6px 0 0 -2px; }
```
